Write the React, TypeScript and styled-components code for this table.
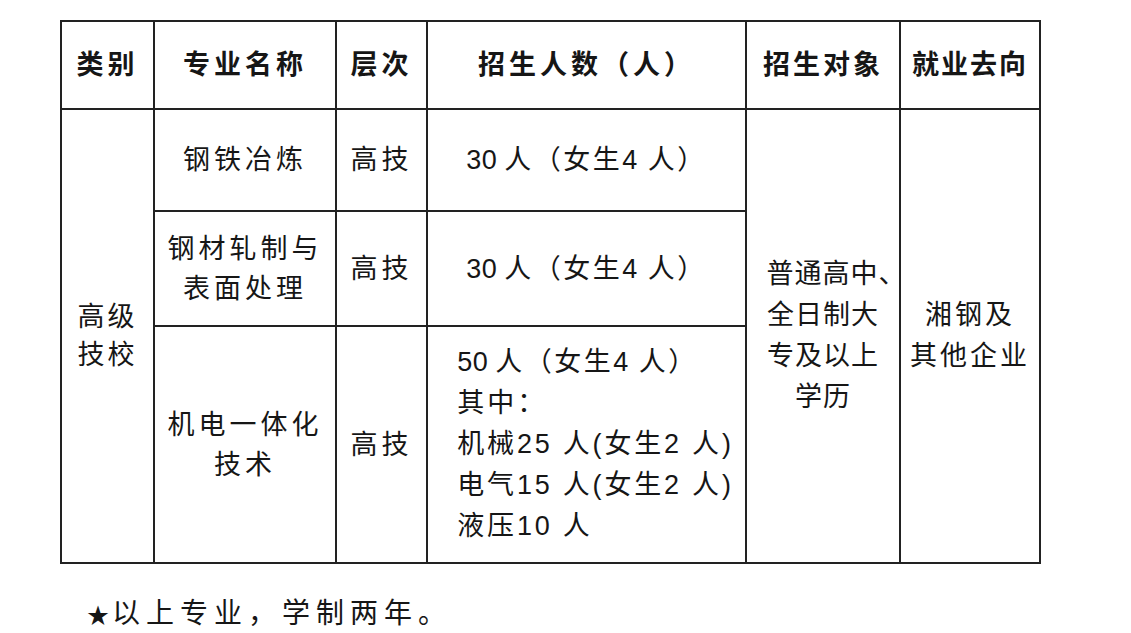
import React from 'react'
import styled, { createGlobalStyle } from 'styled-components'

const GlobalStyle = createGlobalStyle`
  html, body {
    margin: 0;
    padding: 0;
    background: #ffffff;
  }
  body {
    font-family: "Liberation Sans", "Noto Sans CJK SC", sans-serif;
    color: #161616;
  }
`

const Page = styled.div`
  padding: 20px 0 0 60px;
`

const Table = styled.table`
  width: 981px;
  table-layout: fixed;
  border-collapse: collapse;
  font-size: 27px;
`

const HeadRow = styled.tr`
  height: 88px;
`

const BodyRow = styled.tr<{ $h: number }>`
  height: ${(p) => p.$h}px;
`

const Cell = styled.td<{ $spacing?: number; $padLeft?: number }>`
  border: 2px solid #222;
  padding: 0 0 0 ${(p) => p.$padLeft ?? 0}px;
  text-align: center;
  vertical-align: middle;
  line-height: 40px;
  letter-spacing: ${(p) => p.$spacing ?? 4}px;
  white-space: nowrap;
`

const HeadCell = styled(Cell).attrs({ as: 'th' })`
  font-weight: 700;
`

const Block = styled.div`
  display: inline-block;
  text-align: left;
`

const Line = styled.div<{ $spacing?: number; $h?: number }>`
  line-height: ${(p) => p.$h ?? 41}px;
  letter-spacing: ${(p) => p.$spacing ?? 2.5}px;
`

const Num = styled.span<{ $gap?: number }>`
  letter-spacing: 0.5px;
  margin-right: ${(p) => p.$gap ?? 0}px;
`

const Hang = styled.span`
  margin-right: -27px;
`

const Note = styled.p`
  margin: 30px 0 0 27px;
  font-size: 28px;
  line-height: 40px;
  letter-spacing: 6px;
`

const Star = styled.span`
  font-size: 22px;
  letter-spacing: 3px;
`

const columns = [93, 182, 91, 319, 154, 140]

const Count: React.FC<{ n: string; girls: string }> = ({ n, girls }) => (
  <>
    <Num $gap={7}>{n}</Num>人（女生<Num>{girls}</Num> 人）
  </>
)

const App: React.FC = () => {
  return (
    <Page>
      <GlobalStyle />
      <Table>
        <colgroup>
          {columns.map((w, i) => (
            <col key={i} style={{ width: w }} />
          ))}
        </colgroup>
        <thead>
          <HeadRow>
            <HeadCell>类别</HeadCell>
            <HeadCell>专业名称</HeadCell>
            <HeadCell>层次</HeadCell>
            <HeadCell $spacing={4}>招生人数（人）</HeadCell>
            <HeadCell $spacing={3}>招生对象</HeadCell>
            <HeadCell $spacing={2}>就业去向</HeadCell>
          </HeadRow>
        </thead>
        <tbody>
          <BodyRow $h={102}>
            <Cell rowSpan={3} $spacing={3}>
              <Line $h={38} $spacing={3}>高级</Line>
              <Line $h={38} $spacing={3}>技校</Line>
            </Cell>
            <Cell>钢铁冶炼</Cell>
            <Cell>高技</Cell>
            <Cell $spacing={2.5}>
              <Count n="30" girls="4" />
            </Cell>
            <Cell rowSpan={3} $spacing={1}>
              <Line $spacing={1}>
                普通高中<Hang>、</Hang>
              </Line>
              <Line $spacing={1}>全日制大</Line>
              <Line $spacing={1}>专及以上</Line>
              <Line $spacing={1}>学历</Line>
            </Cell>
            <Cell rowSpan={3} $spacing={3}>
              <Line $spacing={3}>湘钢及</Line>
              <Line $spacing={3}>其他企业</Line>
            </Cell>
          </BodyRow>
          <BodyRow $h={115}>
            <Cell>
              <Line $h={40} $spacing={4}>钢材轧制与</Line>
              <Line $h={40} $spacing={4}>表面处理</Line>
            </Cell>
            <Cell>高技</Cell>
            <Cell $spacing={2.5}>
              <Count n="30" girls="4" />
            </Cell>
          </BodyRow>
          <BodyRow $h={237}>
            <Cell>
              <Line $h={40} $spacing={4}>机电一体化</Line>
              <Line $h={40} $spacing={4}>技术</Line>
            </Cell>
            <Cell>高技</Cell>
            <Cell $padLeft={18}>
              <Block>
                <Line>
                  <Count n="50" girls="4" />
                </Line>
                <Line $spacing={3}>其中：</Line>
                <Line $spacing={2.8}>机械25 人(女生2 人)</Line>
                <Line $spacing={2.8}>电气15 人(女生2 人)</Line>
                <Line $spacing={2.8}>液压10 人</Line>
              </Block>
            </Cell>
          </BodyRow>
        </tbody>
      </Table>
      <Note>
        <Star>★</Star>以上专业，学制两年。
      </Note>
    </Page>
  )
}

export default App
